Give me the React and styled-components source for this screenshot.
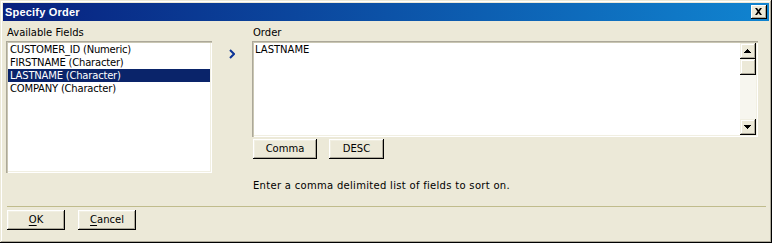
import React from "react";
import styled, { createGlobalStyle } from "styled-components";

const GlobalStyle = createGlobalStyle`
  html, body {
    margin: 0;
    padding: 0;
    background: #ece9d8;
  }
  body {
    font-family: "DejaVu Sans", Verdana, sans-serif;
    font-size: 10px;
    color: #000;
  }
`;

const fields = [
  { id: 1, name: "CUSTOMER_ID (Numeric)" },
  { id: 2, name: "FIRSTNAME (Character)" },
  { id: 3, name: "LASTNAME (Character)", selected: true },
  { id: 4, name: "COMPANY (Character)" },
];

const App = () => {
  return (
    <>
      <GlobalStyle />
      <Window>
        <TitleBar>
          <TitleText>Specify Order</TitleText>
          <CloseButton>
            <svg width="16" height="14" viewBox="0 0 16 14">
              <path
                d="M4 3h2l1.5 2 1.5-2h2l-2.5 3.5 2.5 3.5h-2l-1.5-2-1.5 2h-2l2.5-3.5z"
                fill="#000"
              />
            </svg>
          </CloseButton>
        </TitleBar>
        <Main>
          <LeftColumn>
            <Label>Available Fields</Label>
            <ListBox>
              {fields.map((f) => (
                <ListRow key={f.id} $selected={f.selected}>
                  {f.name}
                </ListRow>
              ))}
            </ListBox>
          </LeftColumn>
          <ArrowCell>
            <svg width="6" height="10" viewBox="0 0 6 10">
              <polyline
                points="1,1 5,5 1,9"
                fill="none"
                stroke="#0c3497"
                strokeWidth="2"
              />
            </svg>
          </ArrowCell>
          <RightColumn>
            <Label>Order</Label>
            <OrderBox>
              <OrderText>LASTNAME</OrderText>
              <ScrollBar>
                <ScrollButton>
                  <svg width="16" height="16" viewBox="0 0 16 16">
                    <path d="M7 6h1v1h1v1h1v1h1v1H4V9h1V8h1V7h1z" fill="#000" />
                  </svg>
                </ScrollButton>
                <ScrollButton />
                <ScrollTrack />
                <ScrollButton>
                  <svg width="16" height="16" viewBox="0 0 16 16">
                    <path d="M4 6h7v1h-1v1h-1v1h-1v1H7V9H6V8H5V7H4z" fill="#000" />
                  </svg>
                </ScrollButton>
              </ScrollBar>
            </OrderBox>
            <ButtonRow>
              <Button $width={64}>Comma</Button>
              <Button $width={55}>DESC</Button>
            </ButtonRow>
            <HelpText>Enter a comma delimited list of fields to sort on.</HelpText>
          </RightColumn>
        </Main>
        <Separator />
        <Footer>
          <Button $width={58}>
            <u>O</u>K
          </Button>
          <Button $width={58}>
            <u>C</u>ancel
          </Button>
        </Footer>
      </Window>
    </>
  );
};

const Window = styled.div`
  box-sizing: border-box;
  width: 772px;
  height: 243px;
  padding: 3px;
  background: #ece9d8;
  box-shadow: inset -1px -1px #000, inset 1px 1px #ece9d8,
    inset -2px -2px #aca899, inset 2px 2px #fff;
  display: flex;
  flex-direction: column;
`;

const TitleBar = styled.div`
  height: 18px;
  flex: 0 0 18px;
  display: flex;
  align-items: center;
  justify-content: space-between;
  padding: 0 2px;
  background: linear-gradient(90deg, #08207e, #1084d0);
  color: #fff;
`;

const TitleText = styled.span`
  font-family: "Liberation Sans", Arial, sans-serif;
  font-weight: bold;
  font-size: 11px;
  letter-spacing: 0.2px;
`;

const CloseButton = styled.div`
  width: 16px;
  height: 14px;
  background: #ece9d8;
  box-shadow: inset -1px -1px #000, inset 1px 1px #fff,
    inset -2px -2px #aca899;
  display: flex;
`;

const Main = styled.div`
  display: flex;
  padding: 5px 0 0 3px;
  flex: 1;
`;

const LeftColumn = styled.div`
  width: 206px;
  display: flex;
  flex-direction: column;
`;

const Label = styled.div`
  height: 13px;
  line-height: 13px;
  margin-bottom: 2px;
  padding-left: 1px;
  white-space: nowrap;
`;

const ListBox = styled.div`
  box-sizing: border-box;
  height: 132px;
  padding: 2px;
  background: #fff;
  box-shadow: inset 1px 1px #aca899, inset 2px 2px #c9c6b3,
    inset -1px -1px #fff, inset -2px -2px #f1efe2;
`;

const ListRow = styled.div`
  height: 13px;
  line-height: 13px;
  padding-left: 2px;
  white-space: nowrap;
  letter-spacing: -0.2px;
  background: ${(p) => (p.$selected ? "#0a246a" : "transparent")};
  color: ${(p) => (p.$selected ? "#fff" : "#000")};
`;

const ArrowCell = styled.div`
  width: 40px;
  display: flex;
  justify-content: center;
  padding-top: 23px;
  box-sizing: border-box;
  align-items: flex-start;
`;

const RightColumn = styled.div`
  width: 506px;
  display: flex;
  flex-direction: column;
`;

const OrderBox = styled.div`
  box-sizing: border-box;
  height: 96px;
  padding: 2px;
  display: flex;
  background: #fff;
  box-shadow: inset 1px 1px #aca899, inset 2px 2px #c9c6b3,
    inset -1px -1px #fff, inset -2px -2px #f1efe2;
`;

const OrderText = styled.div`
  flex: 1;
  line-height: 13px;
  padding: 0 1px;
`;

const ScrollBar = styled.div`
  width: 16px;
  display: flex;
  flex-direction: column;
  background: #f7f6ef;
`;

const ScrollButton = styled.div`
  width: 16px;
  height: 16px;
  flex: 0 0 16px;
  background: #ece9d8;
  box-shadow: inset -1px -1px #000, inset 1px 1px #f1efe2,
    inset -2px -2px #aca899, inset 2px 2px #fff;
  display: flex;
`;

const ScrollTrack = styled.div`
  flex: 1;
`;

const ButtonRow = styled.div`
  display: flex;
  gap: 12px;
  margin-top: 2px;
  padding-left: 1px;
`;

const Button = styled.div`
  box-sizing: border-box;
  width: ${(p) => p.$width}px;
  height: 20px;
  display: flex;
  align-items: center;
  justify-content: center;
  background: #ece9d8;
  box-shadow: inset -1px -1px #000, inset 1px 1px #fff,
    inset -2px -2px #aca899, inset 2px 2px #f1efe2;
  padding-bottom: 1px;

  u {
    text-decoration-thickness: 1px;
    text-underline-offset: 2px;
  }
`;

const HelpText = styled.div`
  margin-top: 20px;
  line-height: 13px;
  padding-left: 1px;
  letter-spacing: 0.3px;
`;

const Separator = styled.div`
  height: 1px;
  margin: 0 3px 0 4px;
  background: #c0bc8c;
`;

const Footer = styled.div`
  display: flex;
  gap: 13px;
  padding: 3px 0 10px 4px;
`;

export default App;
